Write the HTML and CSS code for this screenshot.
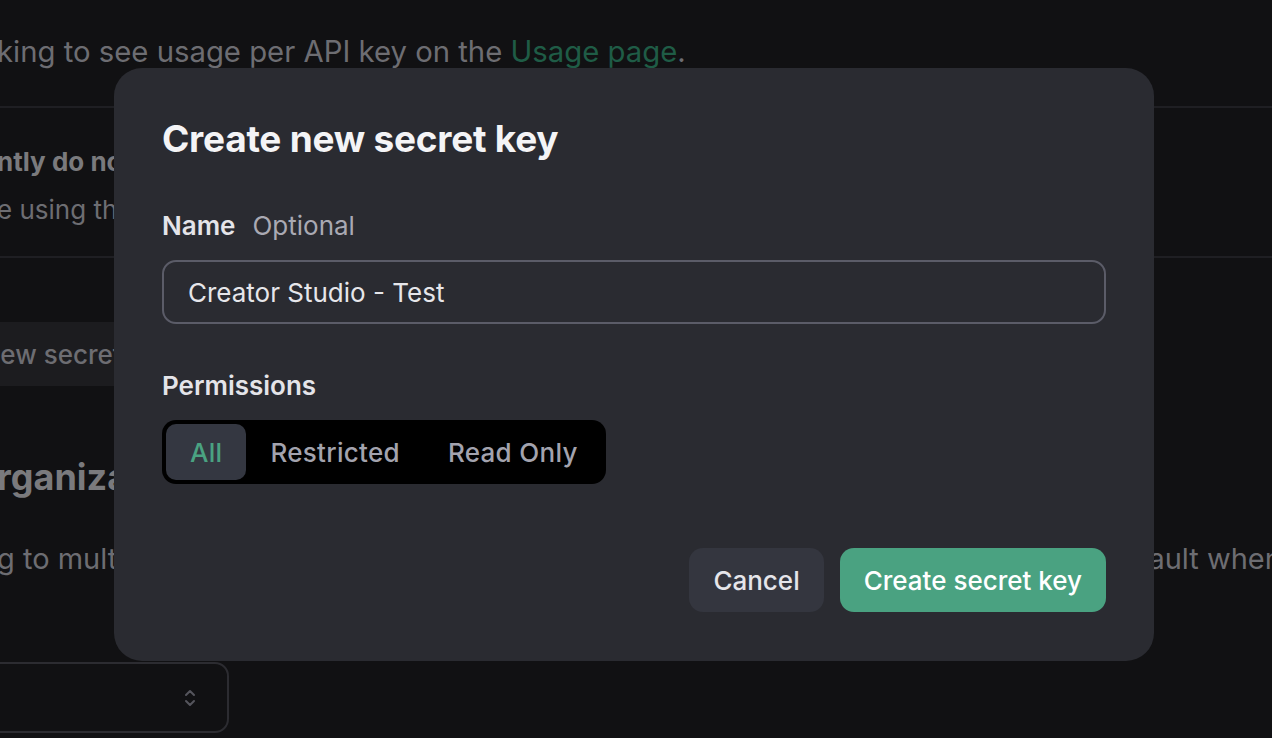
FILE: index.html
```html
<!DOCTYPE html>
<html lang="en">
<head>
<meta charset="utf-8">
<title>Create new secret key</title>
<link rel="stylesheet" href="styles.css">
</head>
<body>
<main class="page">
  <p class="text first">king to see usage per API key on the <a class="link" href="#">Usage page</a>.</p>
  <hr class="divider d1">
  <p class="text strong">ntly do not show the API keys again after you generate them.</p>
  <p class="text second">e using the API keys in your projects and applications.</p>
  <hr class="divider d2">
  <div class="ghost-btn">Create new secret key</div>
  <h2 class="section-title">rganization</h2>
  <p class="text wide">g to multiple organizations, this setting controls which organization gets used by default when making requests.</p>
  <div class="select">
    <svg class="chevrons" width="14" height="22" viewBox="0 0 14 22" aria-hidden="true">
      <path d="M3 8l4-4 4 4" fill="none" stroke="#55555d" stroke-width="2" stroke-linecap="round" stroke-linejoin="round"/>
      <path d="M3 14l4 4 4-4" fill="none" stroke="#55555d" stroke-width="2" stroke-linecap="round" stroke-linejoin="round"/>
    </svg>
  </div>
</main>

<div class="modal" role="dialog" aria-labelledby="modal-title">
  <h1 class="modal-title" id="modal-title">Create new secret key</h1>
  <div class="field-label"><span class="label-main">Name</span><span class="label-sub">Optional</span></div>
  <div class="input">Creator Studio - Test</div>
  <div class="field-label perm"><span class="label-main">Permissions</span></div>
  <div class="segmented">
    <span class="seg active">All</span>
    <span class="seg">Restricted</span>
    <span class="seg">Read Only</span>
  </div>
  <div class="actions">
    <button class="btn btn-cancel">Cancel</button>
    <button class="btn btn-primary">Create secret key</button>
  </div>
</div>
</body>
</html>
```

FILE: styles.css
```css
html, body {
  margin: 0;
  padding: 0;
  background: #111113;
  overflow: hidden;
  height: 100%;
}
body {
  font-family: Inter, "Noto Sans", "Liberation Sans", sans-serif;
  position: relative;
}

.page {
  padding-top: 28px;
  margin-left: -3px;
  width: 1400px;
}

.text {
  margin: 0;
  font-size: 29px;
  line-height: 48px;
  color: #6d6d72;
  white-space: nowrap;
}
.text.first {
  font-size: 29.3px;
}
.text.strong {
  font-size: 26px;
  font-weight: 700;
  color: #7a7a7d;
  margin-top: 30px;
}
.text.second {
  font-size: 26px;
}
.link {
  color: #1f5c46;
  text-decoration: none;
}

.divider {
  border: 0;
  height: 2px;
  background: #1f1f23;
  margin: 0;
}
.d1 { margin-top: 30px; }
.d2 { margin-top: 22px; }

.ghost-btn {
  margin-top: 64px;
  margin-left: -126px;
  width: 360px;
  height: 64px;
  display: flex;
  align-items: center;
  padding-left: 24px;
  box-sizing: border-box;
  background: #1c1c1f;
  border-radius: 12px;
  color: #6d6d72;
  font-size: 26px;
  font-weight: 500;
  white-space: nowrap;
}

.section-title {
  margin: 68px 0 0;
  font-size: 36px;
  line-height: 46px;
  font-weight: 700;
  color: #7a7a7d;
  white-space: nowrap;
}

.wide {
  margin-top: 35px;
}

.select {
  margin-top: 79px;
  margin-left: -60px;
  width: 292px;
  height: 71px;
  box-sizing: border-box;
  border: 2px solid #2c2c31;
  border-radius: 14px;
  display: flex;
  align-items: center;
  justify-content: flex-end;
  padding-right: 30px;
}

/* Modal */
.modal {
  position: absolute;
  top: 68px;
  left: 114px;
  width: 1040px;
  box-sizing: border-box;
  padding: 48px 48px 49px;
  background: #2a2b31;
  border-radius: 28px;
}
.modal-title {
  margin: 0 0 47px;
  font-size: 37px;
  line-height: 46px;
  font-weight: 700;
  letter-spacing: -0.25px;
  color: #f4f4f6;
}
.field-label {
  display: flex;
  gap: 17px;
  font-size: 26px;
  line-height: 34px;
  margin-bottom: 17px;
}
.field-label.perm {
  margin-top: 45px;
}
.label-main {
  font-weight: 600;
  color: #e4e4e9;
}
.label-sub {
  color: #a9a9b3;
}
.input {
  height: 64px;
  box-sizing: border-box;
  border: 2px solid #5b5c68;
  border-radius: 14px;
  display: flex;
  align-items: center;
  padding: 0 24px;
  font-size: 26px;
  color: #e6e6ea;
}
.segmented {
  display: inline-flex;
  background: #000;
  border-radius: 14px;
  padding: 4px;
  height: 64px;
  box-sizing: border-box;
}
.seg {
  display: flex;
  align-items: center;
  padding: 0 24px;
  border-radius: 10px;
  font-size: 26px;
  font-weight: 500;
  letter-spacing: 0.3px;
  color: #a3a3ae;
}
.seg.active {
  background: #343741;
  color: #4aa281;
}
.actions {
  margin-top: 64px;
  display: flex;
  justify-content: flex-end;
  gap: 16px;
}
.btn {
  height: 64px;
  border: 0;
  border-radius: 14px;
  padding: 0 24px;
  font-family: inherit;
  font-size: 26px;
  font-weight: 500;
}
.btn-cancel {
  background: #34363f;
  color: #e5e5ea;
}
.btn-primary {
  background: #4aa281;
  color: #ffffff;
}
```
